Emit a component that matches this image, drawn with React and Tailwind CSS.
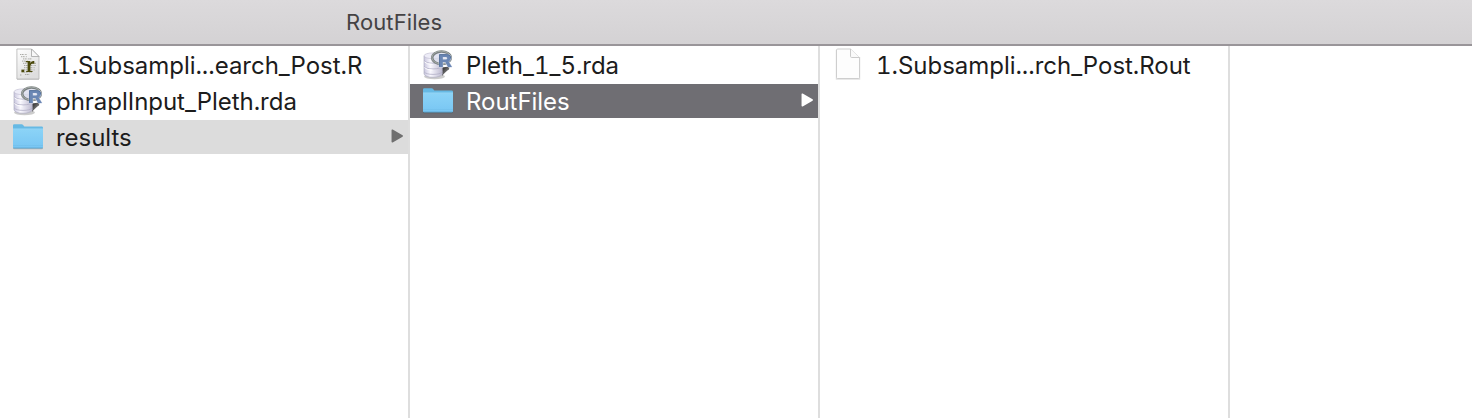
function ScriptIcon() {
  return (
    <svg width="32" height="34" viewBox="0 0 32 34" className="block">
      <defs>
        <linearGradient id="paper" x1="0" y1="0" x2="0.5" y2="1">
          <stop offset="0" stopColor="#ffffff" />
          <stop offset="1" stopColor="#dedede" />
        </linearGradient>
      </defs>
      <path d="M5 1.500h14.500l7.500 7.500V31.800H5z" fill="#000" opacity=".22" />
      <path d="M4.900 1H19.500l7.500 7.500V31H4.900z" fill="url(#paper)" stroke="#b4b4b4" strokeWidth=".8" />
      <path d="M19.500 1v7.500H27z" fill="#f8f8f8" stroke="#a5a5a5" strokeWidth=".8" />
      <g stroke="#8b8b84" strokeWidth=".7" strokeDasharray="1 .6 2 1.200">
        <path d="M8 6.500h7M9 8.700h6M11 10.900h9M10 13.100h6M11 15.300h13M12 17.500h12M12 19.700h11M12 21.900h11M12 24.100h8M8 27h2M13 26.500h5" />
      </g>
      <path d="M13.800 13h4.600v2.300C19 13.700 20 13 21.300 13h1v2.800h-2c-1.300.3-1.900 1.300-1.900 2.900v4.200h2.100v1.200h-6.300v-1.200h1.400v-8.700h-1.800z" fill="#4c4a0c" />
      <path d="M9.400 21.600h2.800v2.700H9.400z" fill="#4c4a0c" />
    </svg>
  );
}

function DataIcon({ id }) {
  return (
    <svg width="32" height="34" viewBox="0 0 32 34" className="block">
      <defs>
        <linearGradient id={id + "c"} x1="0" x2="1">
          <stop offset="0" stopColor="#c9c6de" />
          <stop offset=".35" stopColor="#f9f8fe" />
          <stop offset="1" stopColor="#bcb9cf" />
        </linearGradient>
        <linearGradient id={id + "s"} x1="0" y1="0" x2="1" y2="1">
          <stop offset="0" stopColor="#222" />
          <stop offset="1" stopColor="#aaa" />
        </linearGradient>
      </defs>
      <ellipse cx="12.500" cy="28.400" rx="10.500" ry="2.800" fill="#000" opacity=".2" />
      <path d="M20 28V19.500l7.500-1-.5 3q-3 1.500-7 6.500z" fill={"url(#" + id + "s)"} />
      <path d="M2 8V26q1.500 3.300 9 3.300 7 0 9.300-3V8z" fill={"url(#" + id + "c)"} stroke="#aaa7bd" strokeWidth=".6" />
      <ellipse cx="11" cy="7.800" rx="9" ry="2.900" fill="#edecf7" stroke="#bcb9ce" strokeWidth=".6" />
      <path d="M2 12.500q2 2.700 9 2.700t9.300-2.500M2 18.200q2 2.700 9 2.700t9.300-2.500M2 23.700q2 2.700 9 2.700t9.300-2.500" fill="none" stroke="#b3b0c7" strokeWidth=".8" />
      <path d="M2.500 13.900q2 2.500 8 2.500M2.500 19.600q2 2.500 8 2.500" fill="none" stroke="#fff" strokeWidth=".9" />
      <ellipse cx="19.500" cy="9.800" rx="9.300" ry="6.300" fill="#dde0ee" fillOpacity=".7" stroke="#7a8182" strokeWidth="2.500" />
      <ellipse cx="19.300" cy="9.500" rx="9.400" ry="6.400" fill="none" stroke="#aab0ac" strokeWidth=".9" />
      <path fillRule="evenodd" d="M17.300 6.300h7.300q4.400 0 4.400 3.800 0 2.500-2.400 3.400l3.300 5.500h-3.900l-2.700-5h-2.500v5h-3.500zM20.800 8.900v2.600h2.900q1.600 0 1.600-1.300t-1.600-1.300z" fill="#6b87b4" stroke="#d5dceb" strokeWidth="1" paintOrder="stroke" />
      <path d="M17.500 18.800V6.600h7q4.200 0 4.200 3.500" fill="none" stroke="#47658f" strokeWidth=".7" />
    </svg>
  );
}

function FolderIcon({ id }) {
  return (
    <svg width="32" height="34" viewBox="0 0 32 34" className="block">
      <defs>
        <linearGradient id={id} x1="0" y1="0" x2="0" y2="1">
          <stop offset="0" stopColor="#8bd3f7" />
          <stop offset="1" stopColor="#78c6f3" />
        </linearGradient>
      </defs>
      <path d="M1 9h30v19.200q0 1-1 1H2q-1 0-1-1z" fill="#000" opacity=".18" />
      <path d="M1 5.500q0-1.300 1.300-1.300H9.500q1 0 1.700.9l.6.800q.5.600 1.500.6H29.700q1.300 0 1.300 1.300V27q0 1.200-1.200 1.200H2.200Q1 28.200 1 27z" fill="#66b9e4" />
      <path d="M1 9.300h30V27q0 1-1.200 1H2.200Q1 28 1 27z" fill={"url(#" + id + ")"} />
      <path d="M1 9h30" stroke="#a5ddfa" strokeWidth=".8" />
      <path d="M1.500 25.500h29" stroke="#6bb7e3" strokeWidth=".7" strokeDasharray="1 1" />
      <path d="M1.500 28h29" stroke="#5ca5cd" strokeWidth=".8" />
    </svg>
  );
}

function BlankIcon() {
  return (
    <svg width="32" height="34" viewBox="0 0 32 34" className="block">
      <path d="M4.500 2v29h23V9" fill="none" stroke="#000" strokeOpacity=".12" strokeWidth="1.500" />
      <path d="M5.700 1H18.500L27.500 9.500V29.500q0 1-1 1H5.500q-1 0-1-1V2q0-1 1.200-1z" fill="#fdfdfd" stroke="#cacaca" strokeWidth=".9" />
      <path d="M18.500 1v7.300q0 1.200 1.200 1.200h7.800" fill="#fafafa" stroke="#c5c5c5" strokeWidth=".9" />
    </svg>
  );
}

function Arrow({ color }) {
  return (
    <svg width="13" height="16" viewBox="0 0 13 16" className="mr-[4px] -mt-[2px] ml-auto shrink-0">
      <path d="M1.300 2.200v11.600L11.200 8z" fill={color} stroke={color} strokeWidth="1.500" strokeLinejoin="round" />
    </svg>
  );
}

function Row({ icon, label, selected = "", arrow }) {
  return (
    <div className={"flex h-[34px] items-center pl-[12px] " + selected}>
      <div className="shrink-0">{icon}</div>
      <span className="ml-[12px] pt-px text-2xl leading-[34px] font-normal tracking-[-0.03px] whitespace-nowrap tabular-nums">{label}</span>
      {arrow && <Arrow color={arrow} />}
    </div>
  );
}

function Column({ children }) {
  return (
    <div className="flex w-[410px] shrink-0 flex-col gap-[2px] border-r-2 border-[#dedede] pt-[2px]">
      {children}
    </div>
  );
}

export default function App() {
  return (
    <div className="flex h-[418px] w-[1472px] flex-col overflow-hidden bg-white font-['Inter',sans-serif] text-[#1c1c1c]">
      <header className="h-[46px] shrink-0 border-b-2 border-[#999599] bg-linear-to-b from-[#dcdadc] to-[#d4d2d4] pl-[346px]">
        <h1 className="text-[22px] leading-[44px] font-normal tracking-[0.1px] text-[#444244]">RoutFiles</h1>
      </header>
      <main className="flex min-h-0 flex-1">
        <Column>
          <Row icon={<ScriptIcon />} label="1.Subsampli...earch_Post.R" />
          <Row icon={<DataIcon id="phrapl" />} label="phraplInput_Pleth.rda" />
          <Row icon={<FolderIcon id="results" />} label="results" selected="bg-[#dcdcdc]" arrow="#6f6f6f" />
        </Column>
        <Column>
          <Row icon={<DataIcon id="pleth" />} label="Pleth_1_5.rda" />
          <Row icon={<FolderIcon id="rout" />} label="RoutFiles" selected="bg-[#6f6e73] text-white" arrow="#ffffff" />
        </Column>
        <Column>
          <Row icon={<BlankIcon />} label="1.Subsampli...rch_Post.Rout" />
        </Column>
      </main>
    </div>
  );
}
